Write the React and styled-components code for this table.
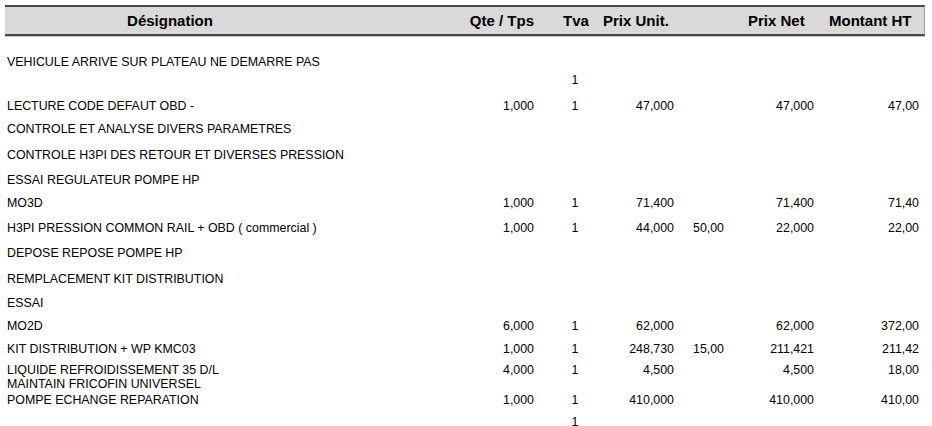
import React from 'react';
import styled, { createGlobalStyle } from 'styled-components';

//----Global----//
const GlobalStyle = createGlobalStyle`
  html, body {
    margin: 0;
    padding: 0;
    background: #fff;
  }
  body {
    font-family: "Liberation Sans", Arial, sans-serif;
    color: #000;
  }
`;

// column widths + how header / data sit in each one
const columns = [
  { key: 'des', label: 'Désignation', width: 330, head: 'center', headPad: '0', data: 'left', dataPad: '0 0 0 2px' },
  { key: 'qte', label: 'Qte / Tps', width: 215, head: 'right', headPad: '0 16px 0 0', data: 'right', dataPad: '0 16px 0 0' },
  { key: 'tva', label: 'Tva', width: 50, head: 'center', headPad: '0 0 0 2px', data: 'center', dataPad: '0' },
  { key: 'pu', label: 'Prix Unit.', width: 80, head: 'left', headPad: '0 0 0 3px', data: 'right', dataPad: '0 6px 0 0' },
  { key: 'rem', label: '', width: 60, head: 'left', headPad: '0', data: 'right', dataPad: '0 16px 0 0' },
  { key: 'pn', label: 'Prix Net', width: 80, head: 'left', headPad: '0 0 0 8px', data: 'right', dataPad: '0 6px 0 0' },
  { key: 'mt', label: 'Montant HT', width: 105, head: 'left', headPad: '0 0 0 9px', data: 'right', dataPad: '0 6px 0 0' },
];

const template = columns.map((c) => `${c.width}px`).join(' ');

const rows = [
  { h: 18, des: 'VEHICULE ARRIVE SUR PLATEAU NE DEMARRE PAS' },
  { h: 26, tva: '1' },
  { h: 23, des: 'LECTURE CODE DEFAUT OBD -', qte: '1,000', tva: '1', pu: '47,000', pn: '47,000', mt: '47,00' },
  { h: 26, des: 'CONTROLE ET ANALYSE DIVERS PARAMETRES' },
  { h: 25, des: 'CONTROLE H3PI DES RETOUR ET DIVERSES PRESSION' },
  { h: 23, des: 'ESSAI REGULATEUR POMPE HP' },
  { h: 25, des: 'MO3D', qte: '1,000', tva: '1', pu: '71,400', pn: '71,400', mt: '71,40' },
  { h: 25, des: 'H3PI PRESSION COMMON RAIL + OBD ( commercial )', qte: '1,000', tva: '1', pu: '44,000', rem: '50,00', pn: '22,000', mt: '22,00' },
  { h: 26, des: 'DEPOSE REPOSE POMPE HP' },
  { h: 24, des: 'REMPLACEMENT KIT DISTRIBUTION' },
  { h: 23, des: 'ESSAI' },
  { h: 23, des: 'MO2D', qte: '6,000', tva: '1', pu: '62,000', pn: '62,000', mt: '372,00' },
  { h: 21, des: 'KIT DISTRIBUTION + WP KMC03', qte: '1,000', tva: '1', pu: '248,730', rem: '15,00', pn: '211,421', mt: '211,42' },
  { h: 14, des: 'LIQUIDE REFROIDISSEMENT 35 D/L', qte: '4,000', tva: '1', pu: '4,500', pn: '4,500', mt: '18,00' },
  { h: 16, des: 'MAINTAIN FRICOFIN UNIVERSEL' },
  { h: 22, des: 'POMPE ECHANGE REPARATION', qte: '1,000', tva: '1', pu: '410,000', pn: '410,000', mt: '410,00' },
  { h: 14, tva: '1' },
];

//----Styled Components----//
const Page = styled.div`
  padding: 5px 0 0 5px;
  width: 920px;
`;

const HeaderBar = styled.div`
  display: grid;
  grid-template-columns: ${template};
  height: 27px;
  align-items: center;
  background: #d9d9d9;
  border-top: 2px solid #474747;
  border-bottom: 2px solid #474747;
  border-right: 1px solid #9a9a9a;
  box-shadow: 0 1px 0 #c4c4c4;
  font-size: 15px;
  font-weight: 700;
`;

const HeadCell = styled.div`
  text-align: ${(p) => p.$align};
  padding: ${(p) => p.$pad};
  white-space: nowrap;
`;

const Body = styled.div`
  padding-top: 19px;
  display: flex;
  flex-direction: column;
`;

const Row = styled.div`
  display: grid;
  grid-template-columns: ${template};
  height: ${(p) => p.$h}px;
  font-size: 12.4px;
  line-height: 14px;
  color: #000;
`;

const Cell = styled.div`
  text-align: ${(p) => p.$align};
  padding: ${(p) => p.$pad};
  white-space: nowrap;
`;
//----End of Styled Components----//

export default function App() {
  return (
    <>
      <GlobalStyle />
      <Page>
        <HeaderBar>
          {columns.map((c) => (
            <HeadCell key={c.key} $align={c.head} $pad={c.headPad}>
              {c.label}
            </HeadCell>
          ))}
        </HeaderBar>
        <Body>
          {rows.map((r, i) => (
            <Row key={i} $h={r.h}>
              {columns.map((c) => (
                <Cell key={c.key} $align={c.data} $pad={c.dataPad}>
                  {r[c.key] || ''}
                </Cell>
              ))}
            </Row>
          ))}
        </Body>
      </Page>
    </>
  );
}
